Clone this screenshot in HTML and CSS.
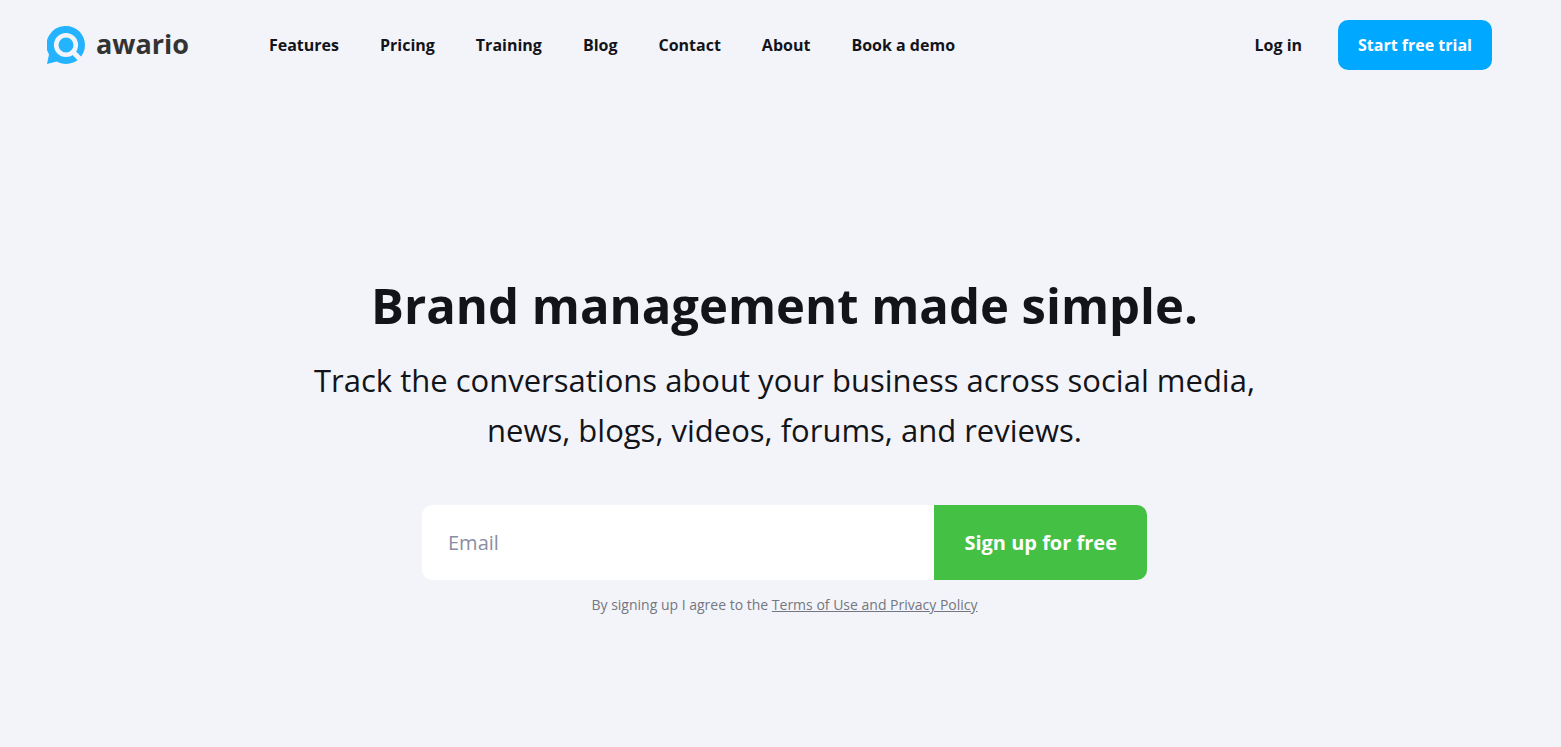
FILE: index.html
```html
<!DOCTYPE html>
<html lang="en">
<head>
    <meta charset="UTF-8">
    <meta name="viewport" content="width=device-width, initial-scale=1.0">
    <title>Awario - Brand management made simple</title>
    <link rel="stylesheet" href="styles.css">
</head>
<body>
    <header class="header">
        <a href="#" class="logo">
            <svg class="logo-icon" viewBox="0 0 38 38" aria-hidden="true">
                <path fill="#24b3ff" d="M19 0a19 19 0 1 1 0 38c-3.500 0-6.500-.8-9.200-2.400L0 38l2-9.600A19 19 0 0 1 19 0z"/>
                <circle cx="19" cy="19" r="9.800" fill="none" stroke="#f3f4f9" stroke-width="4.600"/>
                <path fill="none" stroke="#f3f4f9" stroke-width="5" d="M26 26l8.500 8.500"/>
            </svg>
            <span class="logo-text">awario</span>
        </a>

        <nav class="menu">
            <a href="#">Features</a>
            <a href="#">Pricing</a>
            <a href="#">Training</a>
            <a href="#">Blog</a>
            <a href="#">Contact</a>
            <a href="#">About</a>
            <a href="#">Book a demo</a>
        </nav>

        <div class="account">
            <a href="#" class="login">Log in</a>
            <a href="#" class="trial">Start free trial</a>
        </div>
    </header>

    <main class="hero">
        <h1>Brand management made simple.</h1>
        <p class="subtitle">Track the conversations about your business across social media, news, blogs, videos, forums, and reviews.</p>

        <form class="signup">
            <input type="email" id="email" placeholder="Email" aria-label="Email">
            <button type="submit">Sign up for free</button>
        </form>

        <p class="terms">By signing up I agree to the <a href="#">Terms of Use and Privacy Policy</a></p>
    </main>
</body>
</html>
```

FILE: styles.css
```css
:root {
    --color-text: #121419;
    --color-muted: #747781;
    --color-background: #f3f4f9;
    --color-blue: #00a8ff;
    --color-green: #44c044;
    --radius: 10px;
}

* {
    margin: 0;
    padding: 0;
    box-sizing: border-box;
    font-family: 'Open Sans', sans-serif;
}

body {
    background: var(--color-background);
    color: var(--color-text);
    min-height: 100vh;
}

a {
    color: inherit;
    text-decoration: none;
}

.header {
    display: flex;
    align-items: center;
    padding: 20px 69px 20px 47px;
    font-size: 16px;
    font-weight: 700;
}

.logo {
    display: flex;
    align-items: center;
    gap: 11px;
    margin-right: 80px;
}

.logo-icon {
    width: 38px;
    height: 38px;
}

.logo-text {
    padding-bottom: 2px;
    color: #333333;
    font-size: 27px;
    line-height: 36px;
}

.menu {
    display: flex;
    gap: 41px;
}

.account {
    display: flex;
    align-items: center;
    gap: 36px;
    margin-left: auto;
}

.trial {
    padding: 0 20px;
    border-radius: var(--radius);
    background: var(--color-blue);
    color: white;
    line-height: 50px;
}

/* Hero */
.hero {
    padding: 180px 0 40px 8px;
    text-align: center;
}

h1 {
    font-size: 49px;
    font-weight: 700;
    line-height: 70px;
    margin-bottom: 15px;
}

.subtitle {
    max-width: 960px;
    margin: 0 auto 50px;
    font-size: 31px;
    line-height: 50px;
}

.signup {
    display: flex;
    max-width: 725px;
    height: 75px;
    margin: 0 auto 14px;
    border-radius: var(--radius);
    overflow: hidden;
}

.signup input {
    flex: 1;
    min-width: 0;
    padding: 0 26px;
    border: none;
    outline: none;
    background: white;
    color: var(--color-text);
    font-size: 20px;
}

.signup input::placeholder {
    color: #8b8da3;
}

.signup button {
    padding: 0 30px;
    border: none;
    background: var(--color-green);
    color: white;
    font-size: 20px;
    font-weight: 700;
    cursor: pointer;
}

.terms {
    color: var(--color-muted);
    font-size: 14px;
    line-height: 22px;
}

.terms a {
    text-decoration: underline;
}

@media (max-width: 1100px) {
    .header {
        flex-wrap: wrap;
        gap: 20px;
        padding: 20px;
    }

    .menu {
        flex-wrap: wrap;
        gap: 20px;
    }

    .hero {
        padding: 80px 20px 40px;
    }
}
```
